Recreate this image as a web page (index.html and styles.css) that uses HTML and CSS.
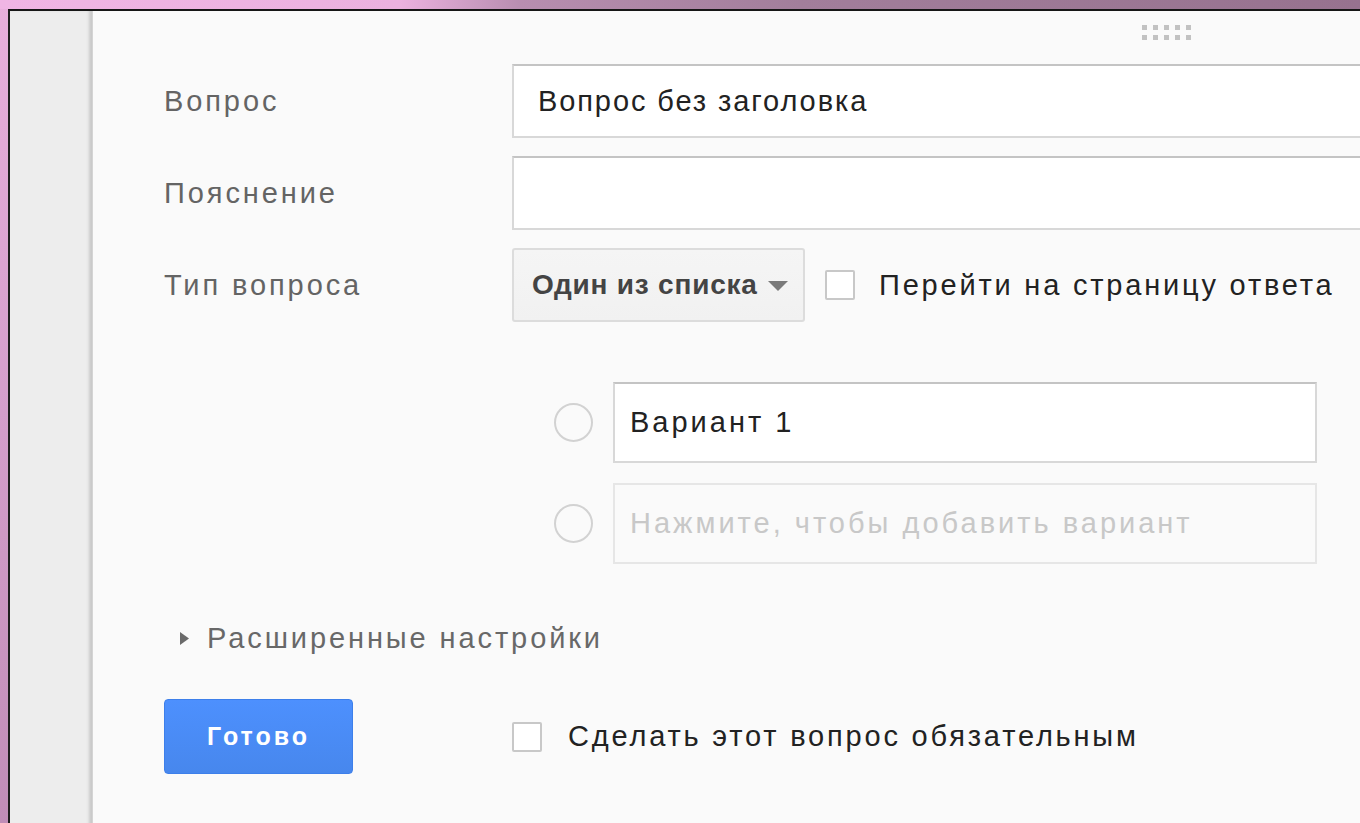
FILE: index.html
```html
<!DOCTYPE html>
<html lang="ru">
<head>
<meta charset="utf-8">
<title>Вопрос без заголовка</title>
<link rel="stylesheet" href="styles.css">
</head>
<body>
<div class="frame">
  <div class="rail"></div>
  <div class="panel">
    <div class="handle">
      <span></span><span></span><span></span><span></span><span></span>
      <span></span><span></span><span></span><span></span><span></span>
    </div>

    <div class="row">
      <div class="label">Вопрос</div>
      <div class="field wide"><span class="value title">Вопрос без заголовка</span></div>
    </div>
    <div class="row">
      <div class="label">Пояснение</div>
      <div class="field wide"></div>
    </div>
    <div class="row">
      <div class="label">Тип вопроса</div>
      <div class="type-line">
        <div class="dropdown">
          <span>Один из списка</span>
          <svg class="caret" width="20" height="10" viewBox="0 0 20 10"><polygon points="0,0 20,0 10,10" fill="#7a7a7a"/></svg>
        </div>
        <span class="check"></span>
        <span class="check-text">Перейти на страницу ответа</span>
      </div>
    </div>

    <div class="options">
      <div class="option">
        <span class="radio"></span>
        <div class="field opt"><span class="value">Вариант 1</span></div>
      </div>
      <div class="option">
        <span class="radio"></span>
        <div class="field opt ghost"><span class="placeholder">Нажмите, чтобы добавить вариант</span></div>
      </div>
    </div>

    <div class="advanced">
      <svg class="arrow" width="9" height="13" viewBox="0 0 9 13"><polygon points="0,0 9,6.5 0,13" fill="#6a6a6a"/></svg>
      <span>Расширенные настройки</span>
    </div>

    <div class="footer">
      <button class="done">Готово</button>
      <span class="check"></span>
      <span class="check-text">Сделать этот вопрос обязательным</span>
    </div>
  </div>
</div>
</body>
</html>
```

FILE: styles.css
```css
html, body {
  margin: 0;
  height: 100%;
  overflow: hidden;
}

body {
  font-family: "Liberation Sans", Arial, sans-serif;
  background:
    linear-gradient(to right, #f0b5e4 0, #ebb1df 400px, #b88eb0 520px, #a27e9b 800px, #97728f 100%) top left / 100% 9px no-repeat,
    linear-gradient(to bottom, #e8afdc 0, #d49ecb 50%, #c08db7 100%);
}

.frame {
  display: flex;
  margin: 9px 0 0 8px;
  height: 814px;
  border-top: 2px solid #161616;
  border-left: 2px solid #1e1e1e;
  background: #fafafa;
  overflow: hidden;
}

.rail {
  flex: 0 0 82px;
  background: #ededed;
  box-shadow: inset -4px 0 3px -1px #c9c9c9;
}

.panel {
  position: relative;
  flex: 1;
  padding: 53px 0 0 71px;
  background: #fafafa;
  border-left: 1px solid #d4d4d4;
}

/* drag grip at the top of the card */
.handle {
  position: absolute;
  top: 14px;
  left: 1049px;
  display: grid;
  grid-template-columns: repeat(5, 5px);
  gap: 5px 6px;
}
.handle span {
  width: 5px;
  height: 5px;
  background: #c2c2c2;
}

.row {
  display: flex;
  align-items: center;
  height: 74px;
  margin-bottom: 18px;
}

.label {
  flex: 0 0 348px;
  font-size: 29px;
  letter-spacing: 2.9px;
  color: #646464;
}

.field {
  box-sizing: border-box;
  display: flex;
  align-items: center;
  background: #fff;
  border: 2px solid #d8d8d8;
  border-top-color: #c4c4c4;
}
.field.wide {
  width: 900px;
  height: 74px;
  padding-left: 24px;
}

.value {
  font-size: 29px;
  letter-spacing: 3px;
  color: #222;
}
.value.title {
  letter-spacing: 1.9px;
}

.type-line {
  display: flex;
  align-items: center;
  height: 74px;
}

.dropdown {
  box-sizing: border-box;
  display: flex;
  align-items: center;
  gap: 10px;
  width: 293px;
  height: 74px;
  padding-left: 18px;
  background: linear-gradient(#f5f5f5, #f1f1f1);
  border: 2px solid #dcdcdc;
  border-radius: 3px;
  font-size: 28px;
  font-weight: bold;
  color: #444;
  letter-spacing: 0.8px;
}
.caret {
  margin-top: 2px;
}

.check {
  box-sizing: border-box;
  flex: 0 0 auto;
  width: 30px;
  height: 30px;
  background: #fff;
  border: 2px solid #c8c8c8;
  border-radius: 2px;
}
.type-line .check {
  margin: 0 24px 0 20px;
}

.check-text {
  font-size: 29px;
  letter-spacing: 2.8px;
  color: #222;
}

.options {
  display: flex;
  flex-direction: column;
  gap: 20px;
  margin: 60px 0 0 390px;
}
.option {
  display: flex;
  align-items: center;
  gap: 20px;
}
.radio {
  box-sizing: border-box;
  width: 39px;
  height: 39px;
  border: 2px solid #d2d2d2;
  border-radius: 50%;
}
.field.opt {
  width: 704px;
  height: 81px;
  padding-left: 15px;
}
.field.ghost {
  background: #fafafa;
  border-color: #e6e6e6;
}
.placeholder {
  font-size: 29px;
  letter-spacing: 3px;
  color: #c8c8c8;
}

.advanced {
  display: flex;
  align-items: center;
  gap: 18px;
  margin: 58px 0 0 16px;
  font-size: 29px;
  letter-spacing: 2.9px;
  color: #686868;
}

.footer {
  display: flex;
  align-items: center;
  margin-top: 44px;
}
.done {
  box-sizing: border-box;
  width: 189px;
  height: 75px;
  border: 1px solid #3d7fea;
  border-radius: 4px;
  background: linear-gradient(#4d90fe, #4787ed);
  color: #fff;
  font-family: "Liberation Sans", Arial, sans-serif;
  font-size: 25px;
  font-weight: bold;
  letter-spacing: 3px;
}
.footer .check {
  margin: 0 26px 0 159px;
}
```
